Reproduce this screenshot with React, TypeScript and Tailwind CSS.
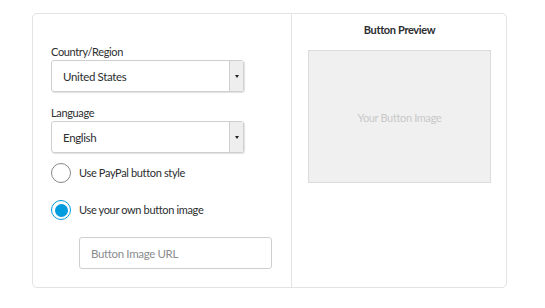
import React from "react";

function Select({ value }: { value: string }) {
  return (
    <div className="flex h-[32px] w-[193px] rounded-[3px] border border-[#cfcfcf] bg-white shadow-[1px_1px_1px_rgba(0,0,0,0.12)]">
      <div className="flex flex-1 items-center pl-[11px] pt-[2px] text-[11.5px] text-[#2c2e2f]">{value}</div>
      <div className="flex w-[14px] items-center justify-center border-l border-[#cfcfcf] bg-[#eeeeee]">
        <div className="h-0 w-0 border-x-[2px] border-t-[3px] border-x-transparent border-t-[#222]" />
      </div>
    </div>
  );
}

function Radio({ checked, label }: { checked?: boolean; label: string }) {
  return (
    <div className="flex items-center gap-[8px]">
      {checked ? (
        <div className="flex h-[20px] w-[20px] items-center justify-center rounded-full border-[1.5px] border-[#009cde] bg-white">
          <div className="h-[13px] w-[13px] rounded-full bg-[#009cde]" />
        </div>
      ) : (
        <div className="h-[20px] w-[20px] rounded-full border border-[#888] bg-white" />
      )}
      <span className="text-[11px] text-[#2c2e2f]">{label}</span>
    </div>
  );
}

export default function App() {
  return (
    <div
      className="h-[308px] w-[545px] bg-white pl-[32px] pt-[13px] tracking-[-0.35px]"
      style={{ fontFamily: "Lato, 'Noto Sans', sans-serif" }}
    >
      <div className="flex h-[275px] w-[475px] rounded-[5px] border border-[#e3e3e3]">
        <div className="w-[259px] border-r border-[#e3e3e3] pl-[18px] pt-[30px]">
          <div className="text-[11px] leading-[16px] text-[#2c2e2f]">Country/Region</div>
          <Select value="United States" />
          <div className="mt-[13px] text-[11px] leading-[16px] text-[#2c2e2f]">Language</div>
          <Select value="English" />
          <div className="mt-[10px] flex flex-col gap-[17px]">
            <Radio label="Use PayPal button style" />
            <Radio checked label="Use your own button image" />
          </div>
          <div className="ml-[28px] mt-[17px] flex h-[32px] w-[193px] items-center rounded-[3px] border border-[#cfcfcf] pl-[11px] pt-[1px] text-[11.5px] text-[#8a8c8e]">
            Button Image URL
          </div>
        </div>
        <div className="flex-1 pl-[16px] pr-[15px] pt-[8px]">
          <div className="text-center text-[11px] font-bold leading-[16px] text-[#2c2e2f]">Button Preview</div>
          <div className="mt-[12px] flex h-[133px] w-[183px] items-center justify-center border border-[#dcdcdc] bg-[#f0f0f0] pt-[3px] text-[11px] text-[#c9c9c9]">
            Your Button Image
          </div>
        </div>
      </div>
    </div>
  );
}
